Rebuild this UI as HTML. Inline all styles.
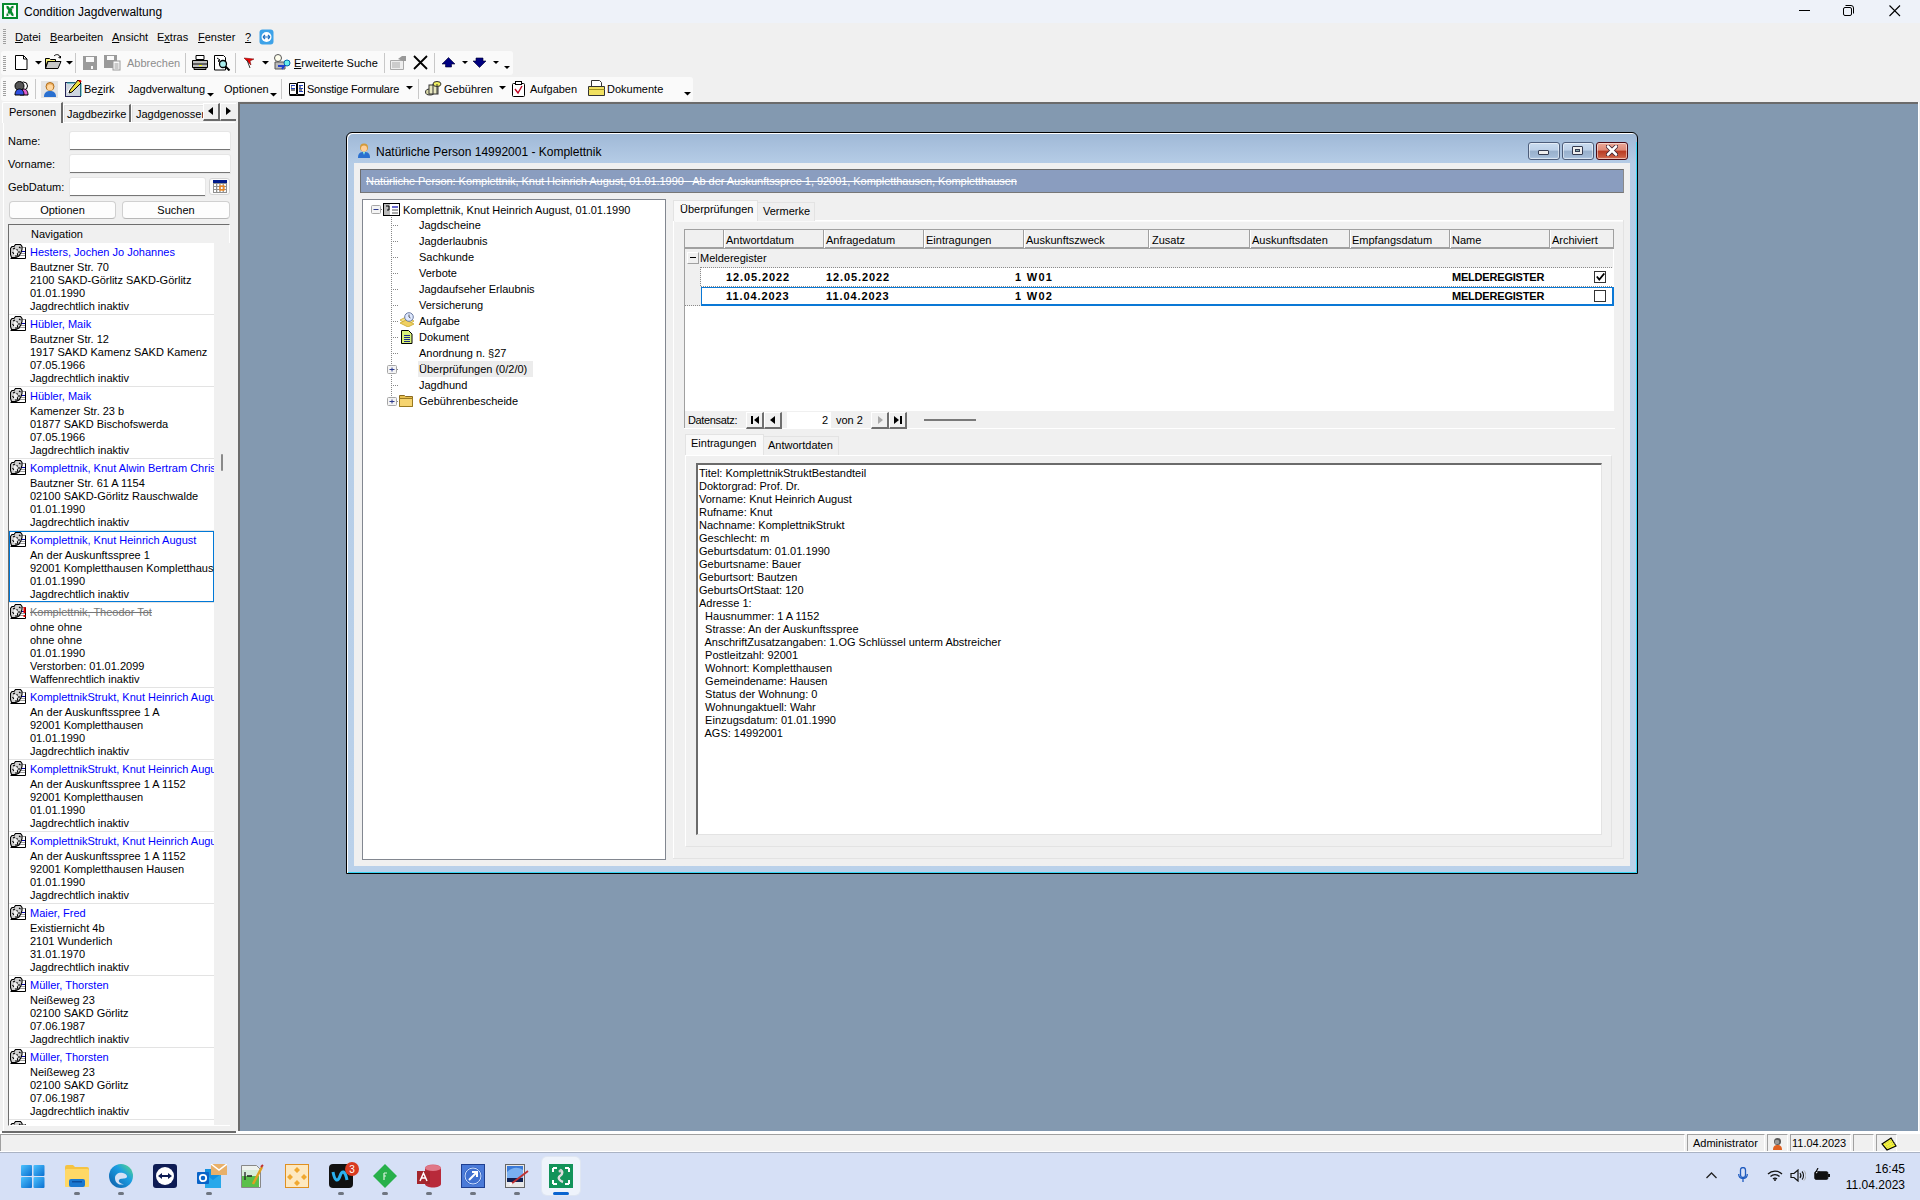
<!DOCTYPE html><html><head><meta charset="utf-8"><title>Condition Jagdverwaltung</title><style>
*{box-sizing:border-box;margin:0;padding:0}
html,body{width:1920px;height:1200px;overflow:hidden;background:#f0f0f0;font-family:"Liberation Sans",sans-serif;font-size:11px;color:#000;position:relative}
.a{position:absolute}
.t{position:absolute;white-space:pre;font-size:11px;line-height:13px}
u{text-decoration:underline}
</style></head><body>
<div class="a" style="left:0px;top:0px;width:1920px;height:23px;background:#eef2f9"></div>
<svg class="a" style="left:2px;top:3px;" width="16" height="16" viewBox="0 0 16 16"><rect width="16" height="16" fill="#078a2e"/><rect x="2" y="2" width="12" height="12" fill="#fff"/><path d="M4.5 4c3 0 2 4 3.5 4s1 4 3.5 4M11.5 4c-3 0-2 4-3.5 4s-1 4-3.5 4" stroke="#078a2e" stroke-width="2.6" fill="none"/><path d="M5 9l2 3M10 5l1 3" stroke="#e6d6de" stroke-width="1"/></svg>
<div class="t" style="left:24px;top:5px;font-size:12px;line-height:14px;">Condition Jagdverwaltung</div>
<div class="a" style="left:1799px;top:10px;width:11px;height:1px;background:#000"></div>
<svg class="a" style="left:1843px;top:5px;" width="11" height="11" viewBox="0 0 11 11"><rect x="0.5" y="2.5" width="8" height="8" rx="1.5" fill="none" stroke="#000"/><path d="M2.5 0.5h5.5a2.5 2.5 0 0 1 2.5 2.5v5.5" fill="none" stroke="#000"/></svg>
<svg class="a" style="left:1889px;top:5px;" width="12" height="12" viewBox="0 0 12 12"><path d="M0.5 0.5L11 11M11 0.5L0.5 11" stroke="#000" stroke-width="1.1"/></svg>
<div class="a" style="left:0px;top:23px;width:1920px;height:28px;background:#f0f0f0"></div>
<div class="a" style="left:3px;top:29px;width:3px;height:1px;background:#a0a0a0"></div>
<div class="a" style="left:3px;top:31px;width:3px;height:1px;background:#a0a0a0"></div>
<div class="a" style="left:3px;top:33px;width:3px;height:1px;background:#a0a0a0"></div>
<div class="a" style="left:3px;top:35px;width:3px;height:1px;background:#a0a0a0"></div>
<div class="a" style="left:3px;top:37px;width:3px;height:1px;background:#a0a0a0"></div>
<div class="a" style="left:3px;top:39px;width:3px;height:1px;background:#a0a0a0"></div>
<div class="a" style="left:3px;top:41px;width:3px;height:1px;background:#a0a0a0"></div>
<div class="a" style="left:3px;top:43px;width:3px;height:1px;background:#a0a0a0"></div>
<div class="t" style="left:15px;top:31px;"><u>D</u>atei</div>
<div class="t" style="left:50px;top:31px;"><u>B</u>earbeiten</div>
<div class="t" style="left:112px;top:31px;"><u>A</u>nsicht</div>
<div class="t" style="left:157px;top:31px;">E<u>x</u>tras</div>
<div class="t" style="left:198px;top:31px;"><u>F</u>enster</div>
<div class="t" style="left:245px;top:31px;"><u>?</u></div>
<svg class="a" style="left:259px;top:29px;" width="15" height="16" viewBox="0 0 15 16"><rect x="0.5" y="0.5" width="14" height="15" rx="3" fill="#3da2e8"/><circle cx="7.5" cy="8" r="5" fill="#fff"/><path d="M4 8h7M4 8l2-2M4 8l2 2M11 8l-2-2M11 8l-2 2" stroke="#1f6fc0" stroke-width="1.2" fill="none"/></svg>
<div class="a" style="left:1px;top:51px;width:512px;height:24px;background:#fafafa;border-radius:3px"></div>
<div class="a" style="left:3px;top:56px;width:3px;height:1px;background:#a0a0a0"></div>
<div class="a" style="left:3px;top:58px;width:3px;height:1px;background:#a0a0a0"></div>
<div class="a" style="left:3px;top:60px;width:3px;height:1px;background:#a0a0a0"></div>
<div class="a" style="left:3px;top:62px;width:3px;height:1px;background:#a0a0a0"></div>
<div class="a" style="left:3px;top:64px;width:3px;height:1px;background:#a0a0a0"></div>
<div class="a" style="left:3px;top:66px;width:3px;height:1px;background:#a0a0a0"></div>
<div class="a" style="left:3px;top:68px;width:3px;height:1px;background:#a0a0a0"></div>
<div class="a" style="left:3px;top:70px;width:3px;height:1px;background:#a0a0a0"></div>
<svg class="a" style="left:15px;top:55px;" width="13" height="15" viewBox="0 0 13 15"><path d="M0.5 0.5h8l3.5 3.5v10.5h-11.5z" fill="#fff" stroke="#000"/><path d="M8.5 0.5v3.5h3.5" fill="none" stroke="#000"/></svg>
<svg class="a" style="left:35px;top:61px;" width="7" height="4" viewBox="0 0 7 4"><path d="M0 0h7L3.5 3.5z" fill="#000"/></svg>
<svg class="a" style="left:45px;top:54px;" width="17" height="16" viewBox="0 0 17 16"><path d="M0.5 4.5h4l1 1h5v2h-8l-2 7z" fill="#f5f07a" stroke="#000"/><path d="M0.5 14.5l2.5-7h13l-3 7z" fill="#c8c8c8" stroke="#000"/><path d="M9 2c2-2 5-2 6 1" fill="none" stroke="#000"/><path d="M13.5 3.5l2 0.5l0-2" fill="none" stroke="#000"/></svg>
<svg class="a" style="left:66px;top:61px;" width="7" height="4" viewBox="0 0 7 4"><path d="M0 0h7L3.5 3.5z" fill="#000"/></svg>
<div class="a" style="left:75px;top:53px;width:1px;height:20px;background:#c8c8c8"></div>
<svg class="a" style="left:83px;top:56px;" width="14" height="14" viewBox="0 0 14 14"><rect x="0" y="0" width="14" height="14" fill="#9a9a9a"/><rect x="3" y="1" width="8" height="5" fill="#fafafa"/><rect x="8" y="10" width="2" height="3" fill="#fafafa"/></svg>
<svg class="a" style="left:104px;top:55px;" width="17" height="16" viewBox="0 0 17 16"><rect x="0" y="0" width="13" height="13" fill="#9a9a9a"/><rect x="3" y="1" width="7" height="4" fill="#fafafa"/><rect x="9" y="6" width="7" height="9" fill="#fafafa" stroke="#9a9a9a"/><path d="M10.5 9h4M10.5 11h4M10.5 13h4" stroke="#9a9a9a"/></svg>
<div class="t" style="left:127px;top:57px;color:#8d8d8d;">Abbrechen</div>
<div class="a" style="left:185px;top:53px;width:1px;height:20px;background:#c8c8c8"></div>
<svg class="a" style="left:192px;top:55px;" width="17" height="15" viewBox="0 0 17 15"><path d="M4 0.5h8v4h-8z" fill="#fff" stroke="#000"/><path d="M0.5 5.5h15v7h-15z" fill="#c0c0c0" stroke="#000"/><path d="M1 9h14" stroke="#000"/><rect x="7" y="10" width="3" height="1" fill="#ff0"/><path d="M2 12.5h12v2h-12z" fill="#909090" stroke="#000"/></svg>
<svg class="a" style="left:214px;top:55px;" width="17" height="16" viewBox="0 0 17 16"><path d="M0.5 0.5h9l2 2v12.5h-11z" fill="#fff" stroke="#000"/><path d="M3 3l3 2-2 1 3 2" stroke="#000" fill="none"/><circle cx="9" cy="9" r="3.5" fill="#aee" stroke="#000" stroke-width="1.3"/><path d="M11.5 11.5l4 4" stroke="#000" stroke-width="2"/></svg>
<div class="a" style="left:235px;top:53px;width:1px;height:20px;background:#c8c8c8"></div>
<svg class="a" style="left:244px;top:57px;" width="11" height="11" viewBox="0 0 11 11"><path d="M0 1l10 1-4 2 1 4z" fill="#e00" stroke="#600" stroke-width="0.5"/><path d="M3 3l3 8" stroke="#333"/></svg>
<svg class="a" style="left:262px;top:61px;" width="7" height="4" viewBox="0 0 7 4"><path d="M0 0h7L3.5 3.5z" fill="#000"/></svg>
<svg class="a" style="left:274px;top:54px;" width="17" height="17" viewBox="0 0 17 17"><circle cx="4" cy="4" r="3.5" fill="#ffe" stroke="#555"/><path d="M1 8h10v7h-10z" fill="#bbb" stroke="#555"/><circle cx="13" cy="9" r="3" fill="#6ee" stroke="#06a"/><path d="M4 12h6l-2 3" stroke="#2040d0" stroke-width="2" fill="none"/></svg>
<div class="t" style="left:294px;top:57px;"><u>E</u>rweiterte Suche</div>
<div class="a" style="left:384px;top:53px;width:1px;height:20px;background:#c8c8c8"></div>
<svg class="a" style="left:390px;top:55px;" width="17" height="15" viewBox="0 0 17 15"><path d="M0.5 5.5h13v9h-13z" fill="#eee" stroke="#aaa"/><path d="M2 8h8M2 10h8M2 12h8" stroke="#aaa"/><path d="M8 4l4-3h4v5h-3" fill="#999"/></svg>
<svg class="a" style="left:413px;top:55px;" width="15" height="15" viewBox="0 0 15 15"><path d="M1 1L14 14M14 1L1 14" stroke="#000" stroke-width="1.8"/></svg>
<div class="a" style="left:434px;top:53px;width:1px;height:20px;background:#c8c8c8"></div>
<svg class="a" style="left:441px;top:57px;" width="15" height="11" viewBox="0 0 15 11"><path d="M7.5 0.5L14 7h-3.5v3h-6v-3H1z" fill="#000080" stroke="#000030" stroke-width=".6"/></svg>
<svg class="a" style="left:462px;top:61px;" width="6" height="4" viewBox="0 0 6 4"><path d="M0 0h6L3.0 3.0z" fill="#000"/></svg>
<svg class="a" style="left:472px;top:57px;" width="15" height="11" viewBox="0 0 15 11"><path d="M4 1h7v3h3L7.5 10.5 1 4h3z" fill="#000080" stroke="#000030" stroke-width=".6"/></svg>
<svg class="a" style="left:493px;top:61px;" width="6" height="4" viewBox="0 0 6 4"><path d="M0 0h6L3.0 3.0z" fill="#000"/></svg>
<svg class="a" style="left:504px;top:66px;" width="6" height="4" viewBox="0 0 6 4"><path d="M0 0h6L3.0 3.0z" fill="#000"/></svg>
<div class="a" style="left:1px;top:77px;width:692px;height:24px;background:#fafafa;border-radius:3px"></div>
<div class="a" style="left:3px;top:81px;width:3px;height:1px;background:#a0a0a0"></div>
<div class="a" style="left:3px;top:83px;width:3px;height:1px;background:#a0a0a0"></div>
<div class="a" style="left:3px;top:85px;width:3px;height:1px;background:#a0a0a0"></div>
<div class="a" style="left:3px;top:87px;width:3px;height:1px;background:#a0a0a0"></div>
<div class="a" style="left:3px;top:89px;width:3px;height:1px;background:#a0a0a0"></div>
<div class="a" style="left:3px;top:91px;width:3px;height:1px;background:#a0a0a0"></div>
<div class="a" style="left:3px;top:93px;width:3px;height:1px;background:#a0a0a0"></div>
<div class="a" style="left:3px;top:95px;width:3px;height:1px;background:#a0a0a0"></div>
<svg class="a" style="left:14px;top:80px;" width="16" height="16" viewBox="0 0 16 16"><circle cx="9.5" cy="6" r="4" fill="#fff" stroke="#000"/><path d="M6 15c0-4 2-6 4-6s4 2 4 6z" fill="#e060d0" stroke="#000"/><circle cx="5.5" cy="6" r="4.5" fill="#555" stroke="#000"/><path d="M1 15c0-4 2-6 4.5-6s4.5 2 4.5 6z" fill="#3050e0" stroke="#000"/></svg>
<div class="a" style="left:35px;top:79px;width:1px;height:20px;background:#c8c8c8"></div>
<div class="a" style="left:41px;top:81px;width:17px;height:17px;background:#e4e4e4"></div>
<svg class="a" style="left:42px;top:81px;" width="16" height="16" viewBox="0 0 16 16"><circle cx="8" cy="5.5" r="4" fill="#f0b060" stroke="#b07020"/><circle cx="8" cy="6.5" r="3" fill="#ffd7a0"/><path d="M2 16c0-5 3-6 6-6s6 1 6 6z" fill="#2a70d0"/></svg>
<svg class="a" style="left:65px;top:80px;" width="17" height="17" viewBox="0 0 17 17"><rect x="0.5" y="2.5" width="15" height="14" fill="#cfd6e0" stroke="#225" /><path d="M2 3h14v13" fill="none" stroke="#2aa" /><path d="M3 13l3-4 8-8" stroke="#fff" stroke-width="3"/><path d="M13 0l3 3-9 9-3 1 1-3z" fill="#f0e040" stroke="#000"/><path d="M14 0l2 2" stroke="#d00" stroke-width="2"/></svg>
<div class="t" style="left:84px;top:83px;">Be<u>z</u>irk</div>
<div class="t" style="left:128px;top:83px;">Jagdverwaltung</div>
<svg class="a" style="left:207px;top:93px;" width="7" height="4" viewBox="0 0 7 4"><path d="M0 0h7L3.5 3.5z" fill="#000"/></svg>
<div class="t" style="left:224px;top:83px;">Optionen</div>
<svg class="a" style="left:270px;top:93px;" width="7" height="4" viewBox="0 0 7 4"><path d="M0 0h7L3.5 3.5z" fill="#000"/></svg>
<div class="a" style="left:281px;top:79px;width:1px;height:20px;background:#c8c8c8"></div>
<svg class="a" style="left:289px;top:81px;" width="16" height="15" viewBox="0 0 16 15"><path d="M0.5 2.5h7v11h-7z M8.5 1.5h7v12h-7z" fill="#fff" stroke="#000"/><path d="M2 4.5h4M2 7.5h4M10 4.5h4M10 7.5h4M10 10.5h4" stroke="#2040c0"/><path d="M2 6h1M2 9h4M10 6h2M10 9h3" stroke="#000"/><path d="M0.5 14.5h15" stroke="#000"/></svg>
<div class="t" style="left:307px;top:83px;letter-spacing:-.22px">Sonstige Formulare</div>
<svg class="a" style="left:406px;top:86px;" width="7" height="4" viewBox="0 0 7 4"><path d="M0 0h7L3.5 3.5z" fill="#000"/></svg>
<div class="a" style="left:418px;top:79px;width:1px;height:20px;background:#c8c8c8"></div>
<svg class="a" style="left:425px;top:80px;" width="17" height="17" viewBox="0 0 17 17"><ellipse cx="5" cy="12" rx="4.5" ry="3" fill="#d8d8a8" stroke="#333"/><rect x="4" y="5" width="9" height="9" fill="#e8e8c0" stroke="#333"/><ellipse cx="12" cy="4" rx="4" ry="2.5" fill="#f0f060" stroke="#333"/><path d="M8 4v10M12 4v10" stroke="#333"/></svg>
<div class="t" style="left:444px;top:83px;">Gebühren</div>
<svg class="a" style="left:499px;top:86px;" width="7" height="4" viewBox="0 0 7 4"><path d="M0 0h7L3.5 3.5z" fill="#000"/></svg>
<svg class="a" style="left:512px;top:81px;" width="14" height="16" viewBox="0 0 14 16"><rect x="0.5" y="2.5" width="12" height="13" rx="1" fill="#fff" stroke="#000"/><rect x="3.5" y="0.5" width="6" height="3" fill="#fff" stroke="#000"/><path d="M3 8l3 4 4-7" stroke="#c00020" stroke-width="1.4" fill="none"/></svg>
<div class="t" style="left:530px;top:83px;">Aufgaben</div>
<svg class="a" style="left:588px;top:80px;" width="17" height="17" viewBox="0 0 17 17"><path d="M3.5 0.5h8l2 2v5h-10z" fill="#fff" stroke="#333"/><path d="M0.5 6.5h16v9h-16z" fill="#f0e060" stroke="#333"/><path d="M0.5 9.5h16" stroke="#a09020"/></svg>
<div class="t" style="left:607px;top:83px;">Dokumente</div>
<svg class="a" style="left:684px;top:92px;" width="7" height="4" viewBox="0 0 7 4"><path d="M0 0h7L3.5 3.5z" fill="#000"/></svg>
<div class="a" style="left:238px;top:102px;width:1682px;height:1030px;background:#8399b0;border-left:2px solid #6b6b6b;border-top:2px solid #6b6b6b"></div>
<div class="a" style="left:238px;top:1131px;width:1682px;height:1px;background:#fff"></div>
<div class="a" style="left:1918px;top:102px;width:1px;height:1030px;background:#fff"></div>
<div class="a" style="left:1919px;top:102px;width:1px;height:1030px;background:#f0f0f0"></div>
<div class="a" style="left:0px;top:1131px;width:1920px;height:3px;background:#fff"></div>
<div class="a" style="left:0px;top:1151px;width:1920px;height:1px;background:#fff"></div>
<div class="a" style="left:0px;top:1152px;width:1920px;height:48px;background:#d6e0f6;border-top:1px solid #aab3c4"></div>
<div class="a" style="left:3px;top:123px;width:1px;height:1009px;background:#fff"></div>
<div class="a" style="left:63px;top:122px;width:172px;height:1px;background:#fff"></div>
<div class="a" style="left:2px;top:102px;width:61px;height:21px;background:#f0f0f0;border-left:1px solid #fff;border-top:1px solid #fff;border-right:2px solid #6a6a6a;border-top-left-radius:2px"></div>
<div class="t" style="left:9px;top:106px;">Personen</div>
<div class="a" style="left:63px;top:104px;width:68px;height:18px;background:#f0f0f0;border-left:1px solid #fff;border-top:1px solid #fff;border-right:2px solid #6a6a6a;box-shadow:inset 1px 1px 0 #e3e3e3"></div>
<div class="t" style="left:67px;top:108px;">Jagdbezirke</div>
<div class="a" style="left:131px;top:104px;width:73px;height:18px;background:#f0f0f0;border-left:1px solid #fff;border-top:1px solid #fff;box-shadow:inset 1px 1px 0 #e3e3e3"></div>
<div class="t" style="left:136px;top:108px;">Jagdgenossen</div>
<div class="a" style="left:203px;top:103px;width:17px;height:18px;background:#f0f0f0;border-bottom:2px solid #6a6a6a;border-right:2px solid #6a6a6a;border-left:1px solid #fff;border-top:1px solid #fff"></div>
<div class="a" style="left:220px;top:103px;width:16px;height:18px;background:#f0f0f0;border-bottom:2px solid #6a6a6a;border-left:1px solid #fff;border-top:1px solid #fff"></div>
<svg class="a" style="left:207px;top:107px;" width="8" height="8" viewBox="0 0 8 8"><path d="M6 0v8L1 4z" fill="#000"/></svg>
<svg class="a" style="left:225px;top:107px;" width="8" height="8" viewBox="0 0 8 8"><path d="M1 0v8l5-4z" fill="#000"/></svg>
<div class="t" style="left:8px;top:135px;">Name:</div>
<div class="t" style="left:8px;top:158px;">Vorname:</div>
<div class="t" style="left:8px;top:181px;">GebDatum:</div>
<div class="a" style="left:70px;top:132px;width:160px;height:18px;background:#fff;border-bottom:1px solid #767676;border-radius:2px 2px 0 0;box-shadow:0 0 0 1px #e6e6e6"></div>
<div class="a" style="left:70px;top:155px;width:160px;height:18px;background:#fff;border-bottom:1px solid #767676;border-radius:2px 2px 0 0;box-shadow:0 0 0 1px #e6e6e6"></div>
<div class="a" style="left:70px;top:178px;width:135px;height:18px;background:#fff;border-bottom:1px solid #767676;border-radius:2px 2px 0 0;box-shadow:0 0 0 1px #e6e6e6"></div>
<div class="a" style="left:209px;top:178px;width:21px;height:17px;background:#fbfbfb;border:1px solid #d5d5d5;border-radius:3px"></div>
<svg class="a" style="left:213px;top:180px;" width="14" height="13" viewBox="0 0 14 13"><rect x="0" y="0" width="14" height="3" fill="#001a8a"/><rect x="0" y="3" width="14" height="10" fill="#8f8f8f"/><rect x="1.0" y="4" width="2" height="2" fill="#fff"/><rect x="4.3" y="4" width="2" height="2" fill="#fff"/><rect x="7.6" y="4" width="2" height="2" fill="#fff"/><rect x="10.9" y="4" width="2" height="2" fill="#fff"/><rect x="1.0" y="7" width="2" height="2" fill="#fff"/><rect x="4.3" y="7" width="2" height="2" fill="#fff"/><rect x="7.6" y="7" width="2" height="2" fill="#fff"/><rect x="10.9" y="7" width="2" height="2" fill="#fff"/><rect x="1.0" y="10" width="2" height="2" fill="#fff"/><rect x="4.3" y="10" width="2" height="2" fill="#fff"/><rect x="7.6" y="10" width="2" height="2" fill="#fff"/><rect x="10.9" y="10" width="2" height="2" fill="#fff"/><rect x="7" y="6" width="4" height="4" fill="none" stroke="#ff8000" stroke-width="1.2"/></svg>
<div class="a" style="left:9px;top:201px;width:107px;height:18px;background:#fdfdfd;border:1px solid #d0d0d0;border-bottom-color:#b8b8b8;border-radius:4px"></div>
<div class="t" style="left:9px;top:204px;width:107px;text-align:center">Optionen</div>
<div class="a" style="left:122px;top:201px;width:108px;height:18px;background:#fdfdfd;border:1px solid #d0d0d0;border-bottom-color:#b8b8b8;border-radius:4px"></div>
<div class="t" style="left:122px;top:204px;width:108px;text-align:center">Suchen</div>
<div class="a" style="left:8px;top:224px;width:222px;height:902px;border-top:1px solid #6e6e6e;border-left:1px solid #6e6e6e;border-right:1px solid #fff;border-bottom:1px solid #fff;background:#f0f0f0"></div>
<div class="a" style="left:9px;top:225px;width:205px;height:18px;background:#f0f0f0"></div>
<div class="t" style="left:31px;top:228px;">Navigation</div>
<div class="a" style="left:9px;top:243px;width:205px;height:882px;background:#fff"></div>
<div class="a" style="left:221px;top:454px;width:2px;height:17px;background:#8a8a8a;border-radius:1px"></div>
<div class="a" style="left:9px;top:243px;width:205px;height:882px;overflow:hidden">
<svg class="a" style="left:1px;top:1px;" width="16" height="15" viewBox="0 0 16 15"><path d="M12 3.5h3.5v11H0.5" fill="none" stroke="#000"/><path d="M12 3.5h3" stroke="#999"/><path d="M10 7.5h5" stroke="#0000a0"/><path d="M11 9.5h4M9 11.5h6" stroke="#999"/><path d="M5.5 0.5h5l1.5 2v3l-1 3-2 3.5-3 1.5H1.5l-1-3v-6l1.5-2h2z" fill="#d0d0d0" stroke="#000" stroke-width="1.1"/><path d="M3 5l2-1M2.5 8l1.5 2M6 6l2 0M7 9l1 3M5 12l2 0M9 3l1.5 1M9 7l0 2" stroke="#000" stroke-width="1.1"/><path d="M4 6h3v5h-3z" fill="#fff" opacity=".7"/></svg>
<div class="t" style="left:21px;top:3px;color:#0000ff;">Hesters, Jochen Jo Johannes</div>
<div class="t" style="left:21px;top:18px;">Bautzner Str. 70</div>
<div class="t" style="left:21px;top:31px;">2100 SAKD-Görlitz SAKD-Görlitz</div>
<div class="t" style="left:21px;top:44px;">01.01.1990</div>
<div class="t" style="left:21px;top:57px;">Jagdrechtlich inaktiv</div>
<div class="a" style="left:0px;top:71px;width:205px;height:1px;background:#e3e3e3"></div>
<svg class="a" style="left:1px;top:73px;" width="16" height="15" viewBox="0 0 16 15"><path d="M12 3.5h3.5v11H0.5" fill="none" stroke="#000"/><path d="M12 3.5h3" stroke="#999"/><path d="M10 7.5h5" stroke="#0000a0"/><path d="M11 9.5h4M9 11.5h6" stroke="#999"/><path d="M5.5 0.5h5l1.5 2v3l-1 3-2 3.5-3 1.5H1.5l-1-3v-6l1.5-2h2z" fill="#d0d0d0" stroke="#000" stroke-width="1.1"/><path d="M3 5l2-1M2.5 8l1.5 2M6 6l2 0M7 9l1 3M5 12l2 0M9 3l1.5 1M9 7l0 2" stroke="#000" stroke-width="1.1"/><path d="M4 6h3v5h-3z" fill="#fff" opacity=".7"/></svg>
<div class="t" style="left:21px;top:75px;color:#0000ff;">Hübler, Maik</div>
<div class="t" style="left:21px;top:90px;">Bautzner Str. 12</div>
<div class="t" style="left:21px;top:103px;">1917 SAKD Kamenz SAKD Kamenz</div>
<div class="t" style="left:21px;top:116px;">07.05.1966</div>
<div class="t" style="left:21px;top:129px;">Jagdrechtlich inaktiv</div>
<div class="a" style="left:0px;top:143px;width:205px;height:1px;background:#e3e3e3"></div>
<svg class="a" style="left:1px;top:145px;" width="16" height="15" viewBox="0 0 16 15"><path d="M12 3.5h3.5v11H0.5" fill="none" stroke="#000"/><path d="M12 3.5h3" stroke="#999"/><path d="M10 7.5h5" stroke="#0000a0"/><path d="M11 9.5h4M9 11.5h6" stroke="#999"/><path d="M5.5 0.5h5l1.5 2v3l-1 3-2 3.5-3 1.5H1.5l-1-3v-6l1.5-2h2z" fill="#d0d0d0" stroke="#000" stroke-width="1.1"/><path d="M3 5l2-1M2.5 8l1.5 2M6 6l2 0M7 9l1 3M5 12l2 0M9 3l1.5 1M9 7l0 2" stroke="#000" stroke-width="1.1"/><path d="M4 6h3v5h-3z" fill="#fff" opacity=".7"/></svg>
<div class="t" style="left:21px;top:147px;color:#0000ff;">Hübler, Maik</div>
<div class="t" style="left:21px;top:162px;">Kamenzer Str. 23 b</div>
<div class="t" style="left:21px;top:175px;">01877 SAKD Bischofswerda</div>
<div class="t" style="left:21px;top:188px;">07.05.1966</div>
<div class="t" style="left:21px;top:201px;">Jagdrechtlich inaktiv</div>
<div class="a" style="left:0px;top:215px;width:205px;height:1px;background:#e3e3e3"></div>
<svg class="a" style="left:1px;top:217px;" width="16" height="15" viewBox="0 0 16 15"><path d="M12 3.5h3.5v11H0.5" fill="none" stroke="#000"/><path d="M12 3.5h3" stroke="#999"/><path d="M10 7.5h5" stroke="#0000a0"/><path d="M11 9.5h4M9 11.5h6" stroke="#999"/><path d="M5.5 0.5h5l1.5 2v3l-1 3-2 3.5-3 1.5H1.5l-1-3v-6l1.5-2h2z" fill="#d0d0d0" stroke="#000" stroke-width="1.1"/><path d="M3 5l2-1M2.5 8l1.5 2M6 6l2 0M7 9l1 3M5 12l2 0M9 3l1.5 1M9 7l0 2" stroke="#000" stroke-width="1.1"/><path d="M4 6h3v5h-3z" fill="#fff" opacity=".7"/></svg>
<div class="t" style="left:21px;top:219px;color:#0000ff;">Komplettnik, Knut Alwin Bertram Christ</div>
<div class="t" style="left:21px;top:234px;">Bautzner Str. 61 A 1154</div>
<div class="t" style="left:21px;top:247px;">02100 SAKD-Görlitz Rauschwalde</div>
<div class="t" style="left:21px;top:260px;">01.01.1990</div>
<div class="t" style="left:21px;top:273px;">Jagdrechtlich inaktiv</div>
<div class="a" style="left:0px;top:287px;width:205px;height:1px;background:#e3e3e3"></div>
<div class="a" style="left:0px;top:288px;width:205px;height:71px;border:1px solid #0078d7"></div>
<svg class="a" style="left:1px;top:289px;" width="16" height="15" viewBox="0 0 16 15"><path d="M12 3.5h3.5v11H0.5" fill="none" stroke="#000"/><path d="M12 3.5h3" stroke="#999"/><path d="M10 7.5h5" stroke="#0000a0"/><path d="M11 9.5h4M9 11.5h6" stroke="#999"/><path d="M5.5 0.5h5l1.5 2v3l-1 3-2 3.5-3 1.5H1.5l-1-3v-6l1.5-2h2z" fill="#d0d0d0" stroke="#000" stroke-width="1.1"/><path d="M3 5l2-1M2.5 8l1.5 2M6 6l2 0M7 9l1 3M5 12l2 0M9 3l1.5 1M9 7l0 2" stroke="#000" stroke-width="1.1"/><path d="M4 6h3v5h-3z" fill="#fff" opacity=".7"/></svg>
<div class="t" style="left:21px;top:291px;color:#0000ff;">Komplettnik, Knut Heinrich August</div>
<div class="t" style="left:21px;top:306px;">An der Auskunftsspree 1</div>
<div class="t" style="left:21px;top:319px;">92001 Kompletthausen Kompletthausen</div>
<div class="t" style="left:21px;top:332px;">01.01.1990</div>
<div class="t" style="left:21px;top:345px;">Jagdrechtlich inaktiv</div>
<div class="a" style="left:0px;top:359px;width:205px;height:1px;background:#e3e3e3"></div>
<svg class="a" style="left:1px;top:361px;" width="16" height="15" viewBox="0 0 16 15"><path d="M12 3.5h3.5v11H0.5" fill="none" stroke="#000"/><path d="M12 3.5h3" stroke="#999"/><path d="M10 7.5h5" stroke="#0000a0"/><path d="M11 9.5h4M9 11.5h6" stroke="#999"/><path d="M5.5 0.5h5l1.5 2v3l-1 3-2 3.5-3 1.5H1.5l-1-3v-6l1.5-2h2z" fill="#d0d0d0" stroke="#000" stroke-width="1.1"/><path d="M3 5l2-1M2.5 8l1.5 2M6 6l2 0M7 9l1 3M5 12l2 0M9 3l1.5 1M9 7l0 2" stroke="#000" stroke-width="1.1"/><path d="M4 6h3v5h-3z" fill="#fff" opacity=".7"/><path d="M14.5 3v6" stroke="#e00" stroke-width="2"/><rect x="13.5" y="11" width="2" height="2" fill="#e00"/></svg>
<div class="t" style="left:21px;top:363px;color:#777;text-decoration:line-through;">Komplettnik, Theodor Tot</div>
<div class="t" style="left:21px;top:378px;">ohne ohne</div>
<div class="t" style="left:21px;top:391px;">ohne ohne</div>
<div class="t" style="left:21px;top:404px;">01.01.1990</div>
<div class="t" style="left:21px;top:417px;">Verstorben: 01.01.2099</div>
<div class="t" style="left:21px;top:430px;">Waffenrechtlich inaktiv</div>
<div class="a" style="left:0px;top:444px;width:205px;height:1px;background:#e3e3e3"></div>
<svg class="a" style="left:1px;top:446px;" width="16" height="15" viewBox="0 0 16 15"><path d="M12 3.5h3.5v11H0.5" fill="none" stroke="#000"/><path d="M12 3.5h3" stroke="#999"/><path d="M10 7.5h5" stroke="#0000a0"/><path d="M11 9.5h4M9 11.5h6" stroke="#999"/><path d="M5.5 0.5h5l1.5 2v3l-1 3-2 3.5-3 1.5H1.5l-1-3v-6l1.5-2h2z" fill="#d0d0d0" stroke="#000" stroke-width="1.1"/><path d="M3 5l2-1M2.5 8l1.5 2M6 6l2 0M7 9l1 3M5 12l2 0M9 3l1.5 1M9 7l0 2" stroke="#000" stroke-width="1.1"/><path d="M4 6h3v5h-3z" fill="#fff" opacity=".7"/></svg>
<div class="t" style="left:21px;top:448px;color:#0000ff;">KomplettnikStrukt, Knut Heinrich August</div>
<div class="t" style="left:21px;top:463px;">An der Auskunftsspree 1 A</div>
<div class="t" style="left:21px;top:476px;">92001 Kompletthausen</div>
<div class="t" style="left:21px;top:489px;">01.01.1990</div>
<div class="t" style="left:21px;top:502px;">Jagdrechtlich inaktiv</div>
<div class="a" style="left:0px;top:516px;width:205px;height:1px;background:#e3e3e3"></div>
<svg class="a" style="left:1px;top:518px;" width="16" height="15" viewBox="0 0 16 15"><path d="M12 3.5h3.5v11H0.5" fill="none" stroke="#000"/><path d="M12 3.5h3" stroke="#999"/><path d="M10 7.5h5" stroke="#0000a0"/><path d="M11 9.5h4M9 11.5h6" stroke="#999"/><path d="M5.5 0.5h5l1.5 2v3l-1 3-2 3.5-3 1.5H1.5l-1-3v-6l1.5-2h2z" fill="#d0d0d0" stroke="#000" stroke-width="1.1"/><path d="M3 5l2-1M2.5 8l1.5 2M6 6l2 0M7 9l1 3M5 12l2 0M9 3l1.5 1M9 7l0 2" stroke="#000" stroke-width="1.1"/><path d="M4 6h3v5h-3z" fill="#fff" opacity=".7"/></svg>
<div class="t" style="left:21px;top:520px;color:#0000ff;">KomplettnikStrukt, Knut Heinrich August</div>
<div class="t" style="left:21px;top:535px;">An der Auskunftsspree 1 A 1152</div>
<div class="t" style="left:21px;top:548px;">92001 Kompletthausen</div>
<div class="t" style="left:21px;top:561px;">01.01.1990</div>
<div class="t" style="left:21px;top:574px;">Jagdrechtlich inaktiv</div>
<div class="a" style="left:0px;top:588px;width:205px;height:1px;background:#e3e3e3"></div>
<svg class="a" style="left:1px;top:590px;" width="16" height="15" viewBox="0 0 16 15"><path d="M12 3.5h3.5v11H0.5" fill="none" stroke="#000"/><path d="M12 3.5h3" stroke="#999"/><path d="M10 7.5h5" stroke="#0000a0"/><path d="M11 9.5h4M9 11.5h6" stroke="#999"/><path d="M5.5 0.5h5l1.5 2v3l-1 3-2 3.5-3 1.5H1.5l-1-3v-6l1.5-2h2z" fill="#d0d0d0" stroke="#000" stroke-width="1.1"/><path d="M3 5l2-1M2.5 8l1.5 2M6 6l2 0M7 9l1 3M5 12l2 0M9 3l1.5 1M9 7l0 2" stroke="#000" stroke-width="1.1"/><path d="M4 6h3v5h-3z" fill="#fff" opacity=".7"/></svg>
<div class="t" style="left:21px;top:592px;color:#0000ff;">KomplettnikStrukt, Knut Heinrich August</div>
<div class="t" style="left:21px;top:607px;">An der Auskunftsspree 1 A 1152</div>
<div class="t" style="left:21px;top:620px;">92001 Kompletthausen Hausen</div>
<div class="t" style="left:21px;top:633px;">01.01.1990</div>
<div class="t" style="left:21px;top:646px;">Jagdrechtlich inaktiv</div>
<div class="a" style="left:0px;top:660px;width:205px;height:1px;background:#e3e3e3"></div>
<svg class="a" style="left:1px;top:662px;" width="16" height="15" viewBox="0 0 16 15"><path d="M12 3.5h3.5v11H0.5" fill="none" stroke="#000"/><path d="M12 3.5h3" stroke="#999"/><path d="M10 7.5h5" stroke="#0000a0"/><path d="M11 9.5h4M9 11.5h6" stroke="#999"/><path d="M5.5 0.5h5l1.5 2v3l-1 3-2 3.5-3 1.5H1.5l-1-3v-6l1.5-2h2z" fill="#d0d0d0" stroke="#000" stroke-width="1.1"/><path d="M3 5l2-1M2.5 8l1.5 2M6 6l2 0M7 9l1 3M5 12l2 0M9 3l1.5 1M9 7l0 2" stroke="#000" stroke-width="1.1"/><path d="M4 6h3v5h-3z" fill="#fff" opacity=".7"/></svg>
<div class="t" style="left:21px;top:664px;color:#0000ff;">Maier, Fred</div>
<div class="t" style="left:21px;top:679px;">Existiernicht 4b</div>
<div class="t" style="left:21px;top:692px;">2101 Wunderlich</div>
<div class="t" style="left:21px;top:705px;">31.01.1970</div>
<div class="t" style="left:21px;top:718px;">Jagdrechtlich inaktiv</div>
<div class="a" style="left:0px;top:732px;width:205px;height:1px;background:#e3e3e3"></div>
<svg class="a" style="left:1px;top:734px;" width="16" height="15" viewBox="0 0 16 15"><path d="M12 3.5h3.5v11H0.5" fill="none" stroke="#000"/><path d="M12 3.5h3" stroke="#999"/><path d="M10 7.5h5" stroke="#0000a0"/><path d="M11 9.5h4M9 11.5h6" stroke="#999"/><path d="M5.5 0.5h5l1.5 2v3l-1 3-2 3.5-3 1.5H1.5l-1-3v-6l1.5-2h2z" fill="#d0d0d0" stroke="#000" stroke-width="1.1"/><path d="M3 5l2-1M2.5 8l1.5 2M6 6l2 0M7 9l1 3M5 12l2 0M9 3l1.5 1M9 7l0 2" stroke="#000" stroke-width="1.1"/><path d="M4 6h3v5h-3z" fill="#fff" opacity=".7"/></svg>
<div class="t" style="left:21px;top:736px;color:#0000ff;">Müller, Thorsten</div>
<div class="t" style="left:21px;top:751px;">Neißeweg 23</div>
<div class="t" style="left:21px;top:764px;">02100 SAKD Görlitz</div>
<div class="t" style="left:21px;top:777px;">07.06.1987</div>
<div class="t" style="left:21px;top:790px;">Jagdrechtlich inaktiv</div>
<div class="a" style="left:0px;top:804px;width:205px;height:1px;background:#e3e3e3"></div>
<svg class="a" style="left:1px;top:806px;" width="16" height="15" viewBox="0 0 16 15"><path d="M12 3.5h3.5v11H0.5" fill="none" stroke="#000"/><path d="M12 3.5h3" stroke="#999"/><path d="M10 7.5h5" stroke="#0000a0"/><path d="M11 9.5h4M9 11.5h6" stroke="#999"/><path d="M5.5 0.5h5l1.5 2v3l-1 3-2 3.5-3 1.5H1.5l-1-3v-6l1.5-2h2z" fill="#d0d0d0" stroke="#000" stroke-width="1.1"/><path d="M3 5l2-1M2.5 8l1.5 2M6 6l2 0M7 9l1 3M5 12l2 0M9 3l1.5 1M9 7l0 2" stroke="#000" stroke-width="1.1"/><path d="M4 6h3v5h-3z" fill="#fff" opacity=".7"/></svg>
<div class="t" style="left:21px;top:808px;color:#0000ff;">Müller, Thorsten</div>
<div class="t" style="left:21px;top:823px;">Neißeweg 23</div>
<div class="t" style="left:21px;top:836px;">02100 SAKD Görlitz</div>
<div class="t" style="left:21px;top:849px;">07.06.1987</div>
<div class="t" style="left:21px;top:862px;">Jagdrechtlich inaktiv</div>
<div class="a" style="left:0px;top:876px;width:205px;height:1px;background:#e3e3e3"></div>
<svg class="a" style="left:1px;top:878px;" width="16" height="15" viewBox="0 0 16 15"><path d="M12 3.5h3.5v11H0.5" fill="none" stroke="#000"/><path d="M12 3.5h3" stroke="#999"/><path d="M10 7.5h5" stroke="#0000a0"/><path d="M11 9.5h4M9 11.5h6" stroke="#999"/><path d="M5.5 0.5h5l1.5 2v3l-1 3-2 3.5-3 1.5H1.5l-1-3v-6l1.5-2h2z" fill="#d0d0d0" stroke="#000" stroke-width="1.1"/><path d="M3 5l2-1M2.5 8l1.5 2M6 6l2 0M7 9l1 3M5 12l2 0M9 3l1.5 1M9 7l0 2" stroke="#000" stroke-width="1.1"/><path d="M4 6h3v5h-3z" fill="#fff" opacity=".7"/></svg>
<div class="t" style="left:21px;top:880px;color:#0000ff;">KomplettnikStrukt, Knut Heinrich August</div>
<div class="t" style="left:21px;top:895px;">x</div>
<div class="t" style="left:21px;top:908px;">x</div>
<div class="t" style="left:21px;top:921px;">x</div>
<div class="t" style="left:21px;top:934px;">x</div>
<div class="a" style="left:0px;top:948px;width:205px;height:1px;background:#e3e3e3"></div>
</div>
<div class="a" style="left:214px;top:243px;width:16px;height:882px;background:#f0f0f0"></div>
<div class="a" style="left:221px;top:454px;width:2px;height:17px;background:#8a8a8a;border-radius:1px"></div>
<div class="a" style="left:2px;top:1131px;width:234px;height:2px;background:#6b6b6b"></div>
<div class="a" style="left:346px;top:132px;width:1292px;height:742px;background:linear-gradient(180deg,#9fb8d6 0px,#b5cce6 30px,#bad1ea 100%);border:1px solid #000;border-radius:6px 6px 0 0;box-shadow:inset 1px 1px 0 #fff"></div>
<div class="a" style="left:1636px;top:142px;width:1px;height:731px;background:#35d5f5"></div>
<div class="a" style="left:348px;top:872px;width:1289px;height:1px;background:#35d5f5"></div>
<svg class="a" style="left:358px;top:143px;" width="12" height="15" viewBox="0 0 12 15"><circle cx="6" cy="4.5" r="4" fill="#d39a3a"/><circle cx="6" cy="5.5" r="3" fill="#ffcf9a"/><path d="M0 15c0-5 2-6 6-6s6 1 6 6z" fill="#2a70d0"/><path d="M5 9l1 3 1-3z" fill="#9fd"/></svg>
<div class="t" style="left:376px;top:145px;font-size:12px;line-height:14px;">Natürliche Person 14992001 - Komplettnik</div>
<div class="a" style="left:1528px;top:142px;width:32px;height:18px;background:linear-gradient(180deg,#cadcf0 0%,#bcd0e8 45%,#98b0cc 50%,#a2bad6 85%,#b6cce6 100%);border:1px solid #4d5d7a;border-radius:3px;box-shadow:inset 0 0 0 1px rgba(255,255,255,.5)"></div>
<div class="a" style="left:1562px;top:142px;width:32px;height:18px;background:linear-gradient(180deg,#cadcf0 0%,#bcd0e8 45%,#98b0cc 50%,#a2bad6 85%,#b6cce6 100%);border:1px solid #4d5d7a;border-radius:3px;box-shadow:inset 0 0 0 1px rgba(255,255,255,.5)"></div>
<div class="a" style="left:1596px;top:142px;width:32px;height:18px;background:linear-gradient(180deg,#eaa898 0%,#df8a78 45%,#b83a22 50%,#c85a40 85%,#dc7a60 100%);border:1px solid #4a0a14;border-radius:3px;box-shadow:inset 0 0 0 1px rgba(255,255,255,.5)"></div>
<div class="a" style="left:1538px;top:150px;width:11px;height:5px;background:#eee;border:1px solid #333a50;border-radius:1px"></div>
<div class="a" style="left:1572px;top:146px;width:11px;height:9px;background:#eee;border:1px solid #333a50;border-radius:1px"></div>
<div class="a" style="left:1575px;top:149px;width:5px;height:3px;background:#8aa;border:1px solid #333a50"></div>
<svg class="a" style="left:1606px;top:145px;" width="12" height="11" viewBox="0 0 12 11"><path d="M2 1.5L10 9.5M10 1.5L2 9.5" stroke="#3a2030" stroke-width="4.2" stroke-linecap="round"/><path d="M2 1.5L10 9.5M10 1.5L2 9.5" stroke="#fff" stroke-width="2.6" stroke-linecap="round"/></svg>
<div class="a" style="left:354px;top:163px;width:1276px;height:703px;background:#f0f0f0"></div>
<div class="a" style="left:360px;top:169px;width:1264px;height:24px;background:#8a9dbf;border:1px solid #6d6d6d;border-right-color:#8a8a8a;border-bottom-color:#777"></div>
<div class="t" style="left:366px;top:175px;color:#fff;text-decoration:line-through;letter-spacing:-.05px">Natürliche Person: Komplettnik, Knut Heinrich August, 01.01.1990   Ab der Auskunftsspree 1, 92001, Kompletthausen, Kompletthausen</div>
<div class="a" style="left:362px;top:199px;width:304px;height:661px;background:#fff;border:1px solid #828790"></div>
<svg class="a" style="left:371px;top:205px;" width="10" height="9" viewBox="0 0 10 9"><rect x="0.5" y="0.5" width="9" height="8" rx="1" fill="#f4f4f4" stroke="#a6a6a6"/><path d="M2.5 4.5h5" stroke="#2c3a8c"/></svg>
<div class="a" style="left:381px;top:209px;width:1px;height:1px;background:#777"></div>
<svg class="a" style="left:383px;top:203px;" width="17" height="13" viewBox="0 0 17 13"><rect x="0.5" y="0.5" width="16" height="12" fill="#fff" stroke="#000"/><rect x="1" y="1" width="6" height="11" fill="#bbb"/><path d="M3 3h3v4h-2" stroke="#000" fill="none"/><path d="M9 4h6" stroke="#00a" stroke-width="1.2"/><path d="M9 7h6M9 10h6" stroke="#555"/></svg>
<div class="t" style="left:403px;top:204px;">Komplettnik, Knut Heinrich August, 01.01.1990</div>
<div class="a" style="left:391px;top:217px;width:1px;height:185px;background:repeating-linear-gradient(180deg,#888 0 1px,transparent 1px 2px)"></div>
<div class="a" style="left:393px;top:225px;width:6px;height:1px;background:repeating-linear-gradient(90deg,#888 0 1px,transparent 1px 2px)"></div>
<div class="t" style="left:419px;top:219px;">Jagdscheine</div>
<div class="a" style="left:393px;top:241px;width:6px;height:1px;background:repeating-linear-gradient(90deg,#888 0 1px,transparent 1px 2px)"></div>
<div class="t" style="left:419px;top:235px;">Jagderlaubnis</div>
<div class="a" style="left:393px;top:257px;width:6px;height:1px;background:repeating-linear-gradient(90deg,#888 0 1px,transparent 1px 2px)"></div>
<div class="t" style="left:419px;top:251px;">Sachkunde</div>
<div class="a" style="left:393px;top:273px;width:6px;height:1px;background:repeating-linear-gradient(90deg,#888 0 1px,transparent 1px 2px)"></div>
<div class="t" style="left:419px;top:267px;">Verbote</div>
<div class="a" style="left:393px;top:289px;width:6px;height:1px;background:repeating-linear-gradient(90deg,#888 0 1px,transparent 1px 2px)"></div>
<div class="t" style="left:419px;top:283px;">Jagdaufseher Erlaubnis</div>
<div class="a" style="left:393px;top:305px;width:6px;height:1px;background:repeating-linear-gradient(90deg,#888 0 1px,transparent 1px 2px)"></div>
<div class="t" style="left:419px;top:299px;">Versicherung</div>
<div class="a" style="left:393px;top:321px;width:6px;height:1px;background:repeating-linear-gradient(90deg,#888 0 1px,transparent 1px 2px)"></div>
<svg class="a" style="left:400px;top:312px;" width="15" height="15" viewBox="0 0 15 15"><path d="M0 8l6-3 8 4-6 4z" fill="#f5e08a" stroke="#c8a830" stroke-width=".8"/><path d="M0 11l6-3 8 4-6 3z" fill="#f0d060" stroke="#c8a830" stroke-width=".8"/><circle cx="9" cy="5" r="4.3" fill="#dfe9ff" stroke="#6a7aa0"/><path d="M9 2.5v2.5l1.5 1" stroke="#333" fill="none" stroke-width=".8"/></svg>
<div class="t" style="left:419px;top:315px;">Aufgabe</div>
<div class="a" style="left:393px;top:337px;width:6px;height:1px;background:repeating-linear-gradient(90deg,#888 0 1px,transparent 1px 2px)"></div>
<svg class="a" style="left:401px;top:330px;" width="12" height="14" viewBox="0 0 12 14"><path d="M0.5 0.5h7l3.5 3.5v9.5h-10.5z" fill="#d8f07a" stroke="#000"/><path d="M3 5.5h6M3 7.5h6M3 9.5h6M3 11.5h6" stroke="#1a2a8a"/></svg>
<div class="t" style="left:419px;top:331px;">Dokument</div>
<div class="a" style="left:393px;top:353px;width:6px;height:1px;background:repeating-linear-gradient(90deg,#888 0 1px,transparent 1px 2px)"></div>
<div class="t" style="left:419px;top:347px;">Anordnung n. §27</div>
<div class="a" style="left:393px;top:369px;width:6px;height:1px;background:repeating-linear-gradient(90deg,#888 0 1px,transparent 1px 2px)"></div>
<div class="a" style="left:418px;top:361px;width:115px;height:16px;background:#ececec"></div>
<svg class="a" style="left:387px;top:365px;" width="10" height="9" viewBox="0 0 10 9"><rect x="0.5" y="0.5" width="9" height="8" rx="1" fill="#f4f4f4" stroke="#a6a6a6"/><path d="M2.5 4.5h5" stroke="#2c3a8c"/><path d="M5 2.5v4" stroke="#2c3a8c"/></svg>
<div class="t" style="left:419px;top:363px;">Überprüfungen (0/2/0)</div>
<div class="a" style="left:393px;top:385px;width:6px;height:1px;background:repeating-linear-gradient(90deg,#888 0 1px,transparent 1px 2px)"></div>
<div class="t" style="left:419px;top:379px;">Jagdhund</div>
<div class="a" style="left:393px;top:401px;width:6px;height:1px;background:repeating-linear-gradient(90deg,#888 0 1px,transparent 1px 2px)"></div>
<svg class="a" style="left:387px;top:397px;" width="10" height="9" viewBox="0 0 10 9"><rect x="0.5" y="0.5" width="9" height="8" rx="1" fill="#f4f4f4" stroke="#a6a6a6"/><path d="M2.5 4.5h5" stroke="#2c3a8c"/><path d="M5 2.5v4" stroke="#2c3a8c"/></svg>
<svg class="a" style="left:399px;top:394px;" width="15" height="13" viewBox="0 0 15 13"><path d="M0.5 1.5h5l1 1h7v10h-13z" fill="#e8c050" stroke="#8a6a20"/><path d="M0.5 4.5h13v8h-13z" fill="#f6d470" stroke="#9a7a20"/></svg>
<div class="t" style="left:419px;top:395px;">Gebührenbescheide</div>
<div class="a" style="left:673px;top:220px;width:951px;height:639px;border-left:1px solid #fff;border-top:1px solid #fff;border-right:1px solid #fff;border-bottom:1px solid #fff;background:#f0f0f0"></div>
<div class="a" style="left:673px;top:220px;width:951px;height:639px;border:1px solid #e3e3e3;border-width:0 1px 1px 0"></div>
<div class="a" style="left:673px;top:200px;width:85px;height:21px;background:#f9f9f9;border:1px solid #e3e3e3;border-bottom:0"></div>
<div class="a" style="left:758px;top:202px;width:57px;height:19px;background:#f0f0f0;border:1px solid #e3e3e3;border-bottom:0;border-left:0"></div>
<div class="t" style="left:680px;top:203px;">Überprüfungen</div>
<div class="t" style="left:763px;top:205px;">Vermerke</div>
<div class="a" style="left:675px;top:221px;width:948px;height:1px;background:#f9f9f9"></div>
<div class="a" style="left:684px;top:229px;width:930px;height:199px;background:#fff;border-left:1px solid #a0a0a0;border-top:1px solid #a0a0a0"></div>
<div class="a" style="left:685px;top:230px;width:928px;height:19px;background:#f0f0f0;border-bottom:2px solid #a0a0a0"></div>
<div class="a" style="left:723px;top:230px;width:1px;height:18px;background:#a0a0a0"></div>
<div class="a" style="left:724px;top:230px;width:1px;height:18px;background:#fff"></div>
<div class="a" style="left:823px;top:230px;width:1px;height:18px;background:#a0a0a0"></div>
<div class="a" style="left:824px;top:230px;width:1px;height:18px;background:#fff"></div>
<div class="a" style="left:923px;top:230px;width:1px;height:18px;background:#a0a0a0"></div>
<div class="a" style="left:924px;top:230px;width:1px;height:18px;background:#fff"></div>
<div class="a" style="left:1023px;top:230px;width:1px;height:18px;background:#a0a0a0"></div>
<div class="a" style="left:1024px;top:230px;width:1px;height:18px;background:#fff"></div>
<div class="a" style="left:1148px;top:230px;width:1px;height:18px;background:#a0a0a0"></div>
<div class="a" style="left:1149px;top:230px;width:1px;height:18px;background:#fff"></div>
<div class="a" style="left:1249px;top:230px;width:1px;height:18px;background:#a0a0a0"></div>
<div class="a" style="left:1250px;top:230px;width:1px;height:18px;background:#fff"></div>
<div class="a" style="left:1349px;top:230px;width:1px;height:18px;background:#a0a0a0"></div>
<div class="a" style="left:1350px;top:230px;width:1px;height:18px;background:#fff"></div>
<div class="a" style="left:1449px;top:230px;width:1px;height:18px;background:#a0a0a0"></div>
<div class="a" style="left:1450px;top:230px;width:1px;height:18px;background:#fff"></div>
<div class="a" style="left:1549px;top:230px;width:1px;height:18px;background:#a0a0a0"></div>
<div class="a" style="left:1550px;top:230px;width:1px;height:18px;background:#fff"></div>
<div class="a" style="left:1613px;top:229px;width:1px;height:20px;background:#a0a0a0"></div>
<div class="t" style="left:726px;top:234px;">Antwortdatum</div>
<div class="t" style="left:826px;top:234px;">Anfragedatum</div>
<div class="t" style="left:926px;top:234px;">Eintragungen</div>
<div class="t" style="left:1026px;top:234px;">Auskunftszweck</div>
<div class="t" style="left:1152px;top:234px;">Zusatz</div>
<div class="t" style="left:1252px;top:234px;">Auskunftsdaten</div>
<div class="t" style="left:1352px;top:234px;">Empfangsdatum</div>
<div class="t" style="left:1452px;top:234px;">Name</div>
<div class="t" style="left:1552px;top:234px;">Archiviert</div>
<div class="a" style="left:685px;top:249px;width:928px;height:19px;background:#f0f0f0"></div>
<div class="a" style="left:685px;top:268px;width:16px;height:38px;background:#f0f0f0"></div>
<div class="a" style="left:687px;top:252px;width:12px;height:12px;background:#f0f0f0;border-right:1px solid #a0a0a0;border-bottom:1px solid #a0a0a0;border-top:1px solid #fff;border-left:1px solid #fff"></div>
<div class="a" style="left:690px;top:257px;width:6px;height:1px;background:#000"></div>
<div class="t" style="left:700px;top:252px;">Melderegister</div>
<div class="a" style="left:701px;top:267px;width:912px;height:1px;background:repeating-linear-gradient(90deg,#8a8a8a 0 1px,transparent 1px 2px)"></div>
<div class="a" style="left:700px;top:267px;width:1px;height:20px;background:repeating-linear-gradient(180deg,#8a8a8a 0 1px,transparent 1px 2px)"></div>
<div class="a" style="left:701px;top:286px;width:912px;height:1px;background:repeating-linear-gradient(90deg,#8a8a8a 0 1px,transparent 1px 2px)"></div>
<div class="a" style="left:685px;top:305px;width:16px;height:1px;background:repeating-linear-gradient(90deg,#8a8a8a 0 1px,transparent 1px 2px)"></div>
<div class="a" style="left:701px;top:287px;width:912px;height:19px;border:2px solid #0a78d6;border-width:1px 0 2px 1px"></div>
<div class="a" style="left:1612px;top:287px;width:2px;height:19px;background:#0a78d6"></div>
<div class="t" style="left:726px;top:271px;font-weight:bold;letter-spacing:.9px">12.05.2022</div>
<div class="t" style="left:826px;top:271px;font-weight:bold;letter-spacing:.9px">12.05.2022</div>
<div class="t" style="left:1015px;top:271px;font-weight:bold;letter-spacing:1.3px">1 W01</div>
<div class="t" style="left:1452px;top:271px;font-weight:bold;letter-spacing:-.2px">MELDEREGISTER</div>
<div class="t" style="left:726px;top:290px;font-weight:bold;letter-spacing:.9px">11.04.2023</div>
<div class="t" style="left:826px;top:290px;font-weight:bold;letter-spacing:.9px">11.04.2023</div>
<div class="t" style="left:1015px;top:290px;font-weight:bold;letter-spacing:1.3px">1 W02</div>
<div class="t" style="left:1452px;top:290px;font-weight:bold;letter-spacing:-.2px">MELDEREGISTER</div>
<div class="a" style="left:1594px;top:271px;width:12px;height:12px;background:#fff;border:1px solid #333"></div>
<svg class="a" style="left:1596px;top:273px;" width="9" height="8" viewBox="0 0 9 8"><path d="M0.8 3.5l2.5 3 5-6" stroke="#000" stroke-width="1.8" fill="none"/></svg>
<div class="a" style="left:1594px;top:290px;width:12px;height:12px;background:#fff;border:1px solid #333"></div>
<div class="a" style="left:685px;top:411px;width:929px;height:17px;background:#f0f0f0"></div>
<div class="a" style="left:684px;top:428px;width:931px;height:1px;background:#fff"></div>
<div class="t" style="left:688px;top:414px;letter-spacing:-.35px">Datensatz:</div>
<div class="a" style="left:746px;top:412px;width:18px;height:17px;background:#f0f0f0;border-left:1px solid #fff;border-top:1px solid #fff;border-right:2px solid #6f6f6f;border-bottom:2px solid #6f6f6f"></div>
<svg class="a" style="left:750px;top:415px;" width="10" height="10" viewBox="0 0 10 10"><rect x="1" y="1" width="2" height="8" fill="#000"/><path d="M9 1v8L4 5z" fill="#000"/></svg>
<div class="a" style="left:764px;top:412px;width:18px;height:17px;background:#f0f0f0;border-left:1px solid #fff;border-top:1px solid #fff;border-right:2px solid #6f6f6f;border-bottom:2px solid #6f6f6f"></div>
<svg class="a" style="left:768px;top:415px;" width="10" height="10" viewBox="0 0 10 10"><path d="M7 1v8L2 5z" fill="#000"/></svg>
<div class="a" style="left:787px;top:412px;width:44px;height:16px;background:#fff"></div>
<div class="t" style="left:822px;top:414px;">2</div>
<div class="t" style="left:836px;top:414px;">von 2</div>
<div class="a" style="left:871px;top:412px;width:18px;height:17px;background:#f0f0f0;border-left:1px solid #fff;border-top:1px solid #fff;border-right:2px solid #6f6f6f;border-bottom:2px solid #6f6f6f"></div>
<svg class="a" style="left:875px;top:415px;" width="10" height="10" viewBox="0 0 10 10"><path d="M3 1v8l5-4z" fill="#aaa"/></svg>
<div class="a" style="left:889px;top:412px;width:18px;height:17px;background:#f0f0f0;border-left:1px solid #fff;border-top:1px solid #fff;border-right:2px solid #6f6f6f;border-bottom:2px solid #6f6f6f"></div>
<svg class="a" style="left:893px;top:415px;" width="10" height="10" viewBox="0 0 10 10"><path d="M1 1v8l5-4z" fill="#000"/><rect x="7" y="1" width="2" height="8" fill="#000"/></svg>
<div class="a" style="left:924px;top:419px;width:52px;height:2px;background:#7a7a7a"></div>
<div class="a" style="left:685px;top:434px;width:79px;height:22px;background:#f9f9f9;border:1px solid #e3e3e3;border-bottom:0"></div>
<div class="a" style="left:764px;top:436px;width:75px;height:20px;background:#f0f0f0;border:1px solid #e3e3e3;border-bottom:0;border-left:0"></div>
<div class="t" style="left:691px;top:437px;">Eintragungen</div>
<div class="t" style="left:768px;top:439px;">Antwortdaten</div>
<div class="a" style="left:685px;top:455px;width:927px;height:392px;border:1px solid #fff;border-right-color:#e3e3e3;border-bottom-color:#e3e3e3"></div>
<div class="a" style="left:696px;top:463px;width:906px;height:372px;background:#fff;border-top:2px solid #6b6b6b;border-left:2px solid #6b6b6b;border-right:1px solid #e3e3e3;border-bottom:1px solid #e3e3e3"></div>
<div class="t" style="left:699px;top:467px;">Titel: KomplettnikStruktBestandteil</div>
<div class="t" style="left:699px;top:480px;">Doktorgrad: Prof. Dr.</div>
<div class="t" style="left:699px;top:493px;">Vorname: Knut Heinrich August</div>
<div class="t" style="left:699px;top:506px;">Rufname: Knut</div>
<div class="t" style="left:699px;top:519px;">Nachname: KomplettnikStrukt</div>
<div class="t" style="left:699px;top:532px;">Geschlecht: m</div>
<div class="t" style="left:699px;top:545px;">Geburtsdatum: 01.01.1990</div>
<div class="t" style="left:699px;top:558px;">Geburtsname: Bauer</div>
<div class="t" style="left:699px;top:571px;">Geburtsort: Bautzen</div>
<div class="t" style="left:699px;top:584px;">GeburtsOrtStaat: 120</div>
<div class="t" style="left:699px;top:597px;">Adresse 1:</div>
<div class="t" style="left:699px;top:610px;">  Hausnummer: 1 A 1152</div>
<div class="t" style="left:699px;top:623px;">  Strasse: An der Auskunftsspree</div>
<div class="t" style="left:699px;top:636px;">  AnschriftZusatzangaben: 1.OG Schlüssel unterm Abstreicher</div>
<div class="t" style="left:699px;top:649px;">  Postleitzahl: 92001</div>
<div class="t" style="left:699px;top:662px;">  Wohnort: Kompletthausen</div>
<div class="t" style="left:699px;top:675px;">  Gemeindename: Hausen</div>
<div class="t" style="left:699px;top:688px;">  Status der Wohnung: 0</div>
<div class="t" style="left:699px;top:701px;">  Wohnungaktuell: Wahr</div>
<div class="t" style="left:699px;top:714px;">  Einzugsdatum: 01.01.1990</div>
<div class="t" style="left:699px;top:727px;">  AGS: 14992001</div>
<div class="a" style="left:0px;top:1134px;width:1685px;height:17px;border-left:1px solid #a0a0a0;border-top:1px solid #a0a0a0;border-right:1px solid #fff"></div>
<div class="a" style="left:1687px;top:1134px;width:78px;height:17px;border-left:1px solid #a0a0a0;border-top:1px solid #a0a0a0;border-right:1px solid #fff"></div>
<div class="a" style="left:1767px;top:1134px;width:21px;height:17px;border-left:1px solid #a0a0a0;border-top:1px solid #a0a0a0;border-right:1px solid #fff"></div>
<div class="a" style="left:1790px;top:1134px;width:61px;height:17px;border-left:1px solid #a0a0a0;border-top:1px solid #a0a0a0;border-right:1px solid #fff"></div>
<div class="a" style="left:1853px;top:1134px;width:21px;height:17px;border-left:1px solid #a0a0a0;border-top:1px solid #a0a0a0;border-right:1px solid #fff"></div>
<div class="a" style="left:1876px;top:1134px;width:21px;height:17px;border-left:1px solid #a0a0a0;border-top:1px solid #a0a0a0;border-right:1px solid #fff"></div>
<div class="t" style="left:1693px;top:1137px;color:#000;">Administrator</div>
<svg class="a" style="left:1772px;top:1137px;" width="11" height="14" viewBox="0 0 11 14"><circle cx="5.5" cy="4.5" r="3.5" fill="#555"/><circle cx="5" cy="5" r="2.3" fill="#999"/><path d="M1 13c0-4 2-5 4.5-5S10 9 10 13z" fill="#e06020"/></svg>
<div class="t" style="left:1792px;top:1137px;">11.04.2023</div>
<svg class="a" style="left:1881px;top:1137px;" width="16" height="14" viewBox="0 0 16 14"><path d="M1 7L10 1l5 8-9 4z" fill="#f8f830" stroke="#000" stroke-width="1.2"/><path d="M4 7l8-5M5 9l8-5M6 11l8-5" stroke="#999" stroke-width=".8" stroke-dasharray="1 1"/></svg>
<svg class="a" style="left:21px;top:1165px;" width="24" height="23" viewBox="0 0 24 23"><defs><linearGradient id="wg" x1="0" y1="0" x2="1" y2="1"><stop offset="0" stop-color="#4cc2ff"/><stop offset="1" stop-color="#0a6fd0"/></linearGradient></defs><rect x="0" y="0" width="11" height="11" rx="1" fill="url(#wg)"/><rect x="12.5" y="0" width="11" height="11" rx="1" fill="url(#wg)"/><rect x="0" y="12" width="11" height="11" rx="1" fill="url(#wg)"/><rect x="12.5" y="12" width="11" height="11" rx="1" fill="url(#wg)"/></svg>
<svg class="a" style="left:65px;top:1165px;" width="24" height="22" viewBox="0 0 24 22"><path d="M0 2a2 2 0 0 1 2-2h6l2 2h12a2 2 0 0 1 2 2v16a2 2 0 0 1-2 2H2a2 2 0 0 1-2-2z" fill="#f5c342"/><rect x="0" y="4" width="24" height="18" rx="1.5" fill="#ffd866"/><rect x="4" y="14" width="16" height="8" rx="2" fill="#1a78d0"/><rect x="7" y="16" width="10" height="1.5" fill="#0b4fa0"/></svg>
<svg class="a" style="left:109px;top:1164px;" width="24" height="24" viewBox="0 0 24 24"><defs><linearGradient id="eg" x1="0" y1="1" x2="1" y2="0"><stop offset="0" stop-color="#0c59a4"/><stop offset=".6" stop-color="#1b9de2"/><stop offset="1" stop-color="#5fe07a"/></linearGradient></defs><circle cx="12" cy="12" r="12" fill="url(#eg)"/><path d="M6 14c0-4 4-6 8-5s5 4 3 5c-2 1-6 0-7 2s2 4 5 4c-6 2-9-2-9-6z" fill="#d6e1f5"/></svg>
<svg class="a" style="left:153px;top:1164px;" width="24" height="24" viewBox="0 0 24 24"><rect width="24" height="24" rx="3" fill="#0e1c54"/><circle cx="12" cy="12" r="9" fill="#fff"/><path d="M5 12l4-3v2h6V9l4 3-4 3v-2H9v2z" fill="#0e1c54"/></svg>
<svg class="a" style="left:197px;top:1164px;" width="30" height="24" viewBox="0 0 30 24"><rect x="8" y="5" width="16" height="19" fill="#1490df"/><path d="M8 10l8 6 8-6v14H8z" fill="#28a8ea"/><rect x="14" y="0" width="16" height="11" fill="#e8b06a"/><path d="M14 0l8 6 8-6" stroke="#fff" stroke-width="1.5" fill="none"/><rect x="0" y="8" width="12" height="12" rx="1" fill="#0a64c8"/><circle cx="6" cy="14" r="3.2" fill="none" stroke="#fff" stroke-width="1.8"/></svg>
<svg class="a" style="left:241px;top:1164px;" width="23" height="24" viewBox="0 0 23 24"><path d="M0.5 1.5h15l4 4v18h-19z" fill="#eef2ee" stroke="#888"/><rect x="1" y="10" width="17" height="13" fill="#5ac04a"/><rect x="1" y="6" width="17" height="6" fill="#d8ecd8"/><path d="M4 8v8M6 12h5" stroke="#222" stroke-width="1.3"/><path d="M12 20l9-17" stroke="#e0a020" stroke-width="2.5"/><path d="M20 3l2-2" stroke="#c03030" stroke-width="2"/></svg>
<svg class="a" style="left:285px;top:1164px;" width="24" height="24" viewBox="0 0 24 24"><rect x="0.5" y="0.5" width="23" height="23" fill="#fde8c0" stroke="#e09020"/><path d="M12 3l3 3-3 3-3-3zM5 10l3 3-3 3-3-3zM19 10l3 3-3 3-3-3zM12 16l3 3-3 3-3-3z" fill="#f0a830"/></svg>
<svg class="a" style="left:329px;top:1162px;" width="30" height="26" viewBox="0 0 30 26"><rect x="0" y="2" width="24" height="24" rx="4" fill="#111"/><path d="M4 10c2 10 5 10 7 4s5-6 7 4" stroke="#2ab0f0" stroke-width="3" fill="none"/><circle cx="23" cy="7" r="7" fill="#d83a20"/><text x="23" y="10.5" font-size="10" fill="#fff" text-anchor="middle" font-family="Liberation Sans">3</text></svg>
<svg class="a" style="left:373px;top:1164px;" width="24" height="24" viewBox="0 0 24 24"><path d="M12 0l12 12-12 12L0 12z" fill="#27b04a"/><path d="M11 9h3M11 9v7M11 12h2" stroke="#d9f0dc" stroke-width="1.2"/></svg>
<svg class="a" style="left:417px;top:1164px;" width="25" height="24" viewBox="0 0 25 24"><ellipse cx="16" cy="4" rx="8" ry="3.5" fill="#d65a6a"/><path d="M8 4v16c0 2 4 3.5 8 3.5s8-1.5 8-3.5V4z" fill="#b82a3a"/><ellipse cx="16" cy="4" rx="8" ry="3" fill="#e07888"/><rect x="0" y="7" width="13" height="13" fill="#a4262c"/><path d="M3 17l3.5-8 3.5 8M4.5 14h4" stroke="#fff" stroke-width="1.5" fill="none"/></svg>
<svg class="a" style="left:461px;top:1164px;" width="24" height="24" viewBox="0 0 24 24"><rect x="0.5" y="0.5" width="23" height="23" fill="#4a7ad8" stroke="#1f3f90"/><circle cx="12" cy="12" r="9" fill="#2a5ab8"/><circle cx="12" cy="12" r="8" fill="#3f70d0" stroke="#cfe0ff" stroke-width="1"/><path d="M8 16l8-8M11 8h5v5" stroke="#fff" stroke-width="2" fill="none"/></svg>
<svg class="a" style="left:505px;top:1164px;" width="24" height="24" viewBox="0 0 24 24"><rect x="0.5" y="0.5" width="19" height="23" fill="#e8e8e8" stroke="#666"/><rect x="2" y="2" width="16" height="16" fill="#3a7ad8"/><path d="M2 8c4-4 10-6 16-2v12H2z" fill="#7ab0f0"/><path d="M2 14h16v4H2z" fill="#102050"/><path d="M6 20L23 7" stroke="#c03030" stroke-width="1.8"/><path d="M5 21l2-2" stroke="#fff" stroke-width="2"/></svg>
<div class="a" style="left:542px;top:1157px;width:38px;height:38px;background:#eef3fb;border-radius:5px;box-shadow:0 0 0 1px #dfe6f2"></div>
<svg class="a" style="left:549px;top:1164px;" width="24" height="24" viewBox="0 0 24 24"><rect width="24" height="24" fill="#12935a"/><path d="M4 4h4M4 4v4M20 4h-4M20 4v4M4 20h4M4 20v-4M20 20h-4M20 20v-4" stroke="#fff" stroke-width="2" fill="none"/><path d="M11 6c3 1 3 4 0 6s0 5 3 6" stroke="#ddd" stroke-width="2.4" fill="none"/><circle cx="11" cy="7" r="1.5" fill="#ccc"/></svg>
<div class="a" style="left:553px;top:1192px;width:16px;height:3px;background:#0a64d0;border-radius:2px"></div>
<div class="a" style="left:74px;top:1192px;width:6px;height:3px;background:#6f7580;border-radius:2px"></div>
<div class="a" style="left:118px;top:1192px;width:6px;height:3px;background:#6f7580;border-radius:2px"></div>
<div class="a" style="left:206px;top:1192px;width:6px;height:3px;background:#6f7580;border-radius:2px"></div>
<div class="a" style="left:338px;top:1192px;width:6px;height:3px;background:#6f7580;border-radius:2px"></div>
<div class="a" style="left:382px;top:1192px;width:6px;height:3px;background:#6f7580;border-radius:2px"></div>
<div class="a" style="left:426px;top:1192px;width:6px;height:3px;background:#6f7580;border-radius:2px"></div>
<div class="a" style="left:470px;top:1192px;width:6px;height:3px;background:#6f7580;border-radius:2px"></div>
<div class="a" style="left:514px;top:1192px;width:6px;height:3px;background:#6f7580;border-radius:2px"></div>
<svg class="a" style="left:1706px;top:1172px;" width="11" height="7" viewBox="0 0 11 7"><path d="M0.5 6L5.5 1l5 5" stroke="#222" stroke-width="1.3" fill="none"/></svg>
<svg class="a" style="left:1738px;top:1167px;" width="10" height="16" viewBox="0 0 10 16"><rect x="2.5" y="0.5" width="5" height="10" rx="2.5" fill="none" stroke="#1f5bbf" stroke-width="1.3"/><path d="M0.7 7c0 3 2 4.5 4.3 4.5S9.3 10 9.3 7M5 11.5V15" stroke="#1f5bbf" stroke-width="1.3" fill="none"/></svg>
<svg class="a" style="left:1767px;top:1169px;" width="16" height="12" viewBox="0 0 16 12"><path d="M1 5a10 10 0 0 1 14 0M3.5 7.5a6.5 6.5 0 0 1 9 0M6 10a3 3 0 0 1 4 0" stroke="#111" stroke-width="1.3" fill="none"/><circle cx="8" cy="11" r="1" fill="#111"/></svg>
<svg class="a" style="left:1790px;top:1169px;" width="16" height="13" viewBox="0 0 16 13"><path d="M1 4.5h3l4-3.5v11l-4-3.5H1z" fill="none" stroke="#111" stroke-width="1.2"/><path d="M10 4c1 1.3 1 3.7 0 5M12 2.5c2 2 2 6 0 8" stroke="#111" stroke-width="1.1" fill="none"/><path d="M14 1.5c2.5 3 2.5 7 0 10" stroke="#aaa" stroke-width="1" fill="none"/></svg>
<svg class="a" style="left:1814px;top:1168px;" width="17" height="13" viewBox="0 0 17 13"><rect x="0.8" y="3.8" width="13" height="7.5" rx="1" fill="#111" stroke="#111"/><rect x="14" y="6" width="2" height="3" fill="#111"/><path d="M4 0l-2 4h3l-2 4" stroke="#111" fill="none" stroke-width="1.2"/><path d="M2 5l1.5-1" stroke="#fff"/></svg>
<div class="t" style="left:1830px;top:1162px;width:75px;text-align:right;font-size:12px;line-height:14px">16:45</div>
<div class="t" style="left:1830px;top:1178px;width:75px;text-align:right;font-size:12px;line-height:14px">11.04.2023</div>
</body></html>
